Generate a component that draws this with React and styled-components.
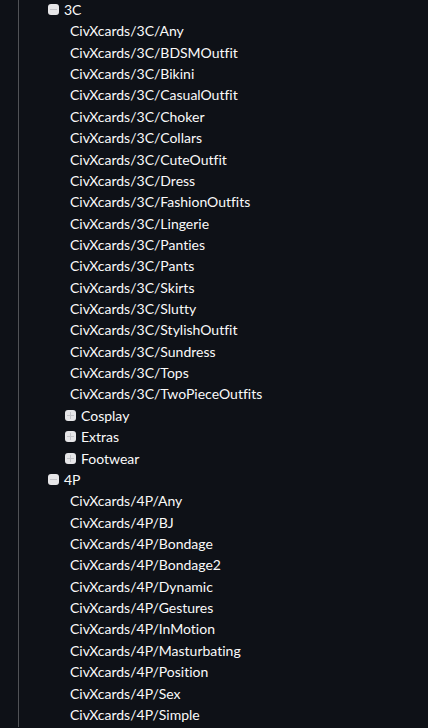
import React from 'react';
import styled, { createGlobalStyle } from 'styled-components';

const GlobalStyle = createGlobalStyle`
  html, body {
    margin: 0;
    padding: 0;
    background: #0e1117;
    height: 100%;
    overflow: hidden;
  }
  body {
    font-family: Lato, "Noto Sans", "Liberation Sans", sans-serif;
    font-variant-ligatures: none;
    font-feature-settings: "liga" 0, "clig" 0;
    color: #fafafa;
  }
`;

const Page = styled.div`
  height: 728px;
  padding-left: 18px;
  box-sizing: border-box;
`;

const Rail = styled.div`
  height: 100%;
  border-left: 1px solid rgba(250, 250, 250, 0.28);
  padding-left: 29px;
  margin-top: -1px;
`;

const List = styled.ul`
  list-style: none;
  margin: 0;
  padding: 0;
`;

const Row = styled.li`
  display: flex;
  align-items: center;
  gap: 5px;
  height: 21.36px;
  font-size: 14px;
  line-height: 21.36px;
  white-space: nowrap;
  padding-left: ${(p) => p.$indent || 0}px;
`;

const Leaf = styled.li`
  height: 21.36px;
  font-size: 14px;
  line-height: 21.36px;
  padding-left: 22px;
  white-space: nowrap;
`;

const Toggle = styled.span`
  position: relative;
  width: 11px;
  height: 11px;
  border-radius: 3px;
  background: #e6e6e8;
  flex: none;
  &::before,
  &::after {
    content: '';
    position: absolute;
    background: #c4c5c9;
  }
  &::before {
    left: 2px;
    right: 2px;
    top: 5px;
    height: 1px;
  }
  &::after {
    display: ${(p) => (p.$open ? 'none' : 'block')};
    top: 2px;
    bottom: 2px;
    left: 5px;
    width: 1px;
  }
`;

const Group = ({ label, open, indent, children }) => (
  <>
    <Row $indent={indent}>
      <Toggle $open={open} />
      {label}
    </Row>
    {open && children}
  </>
);

const c3 = [
  'Any', 'BDSMOutfit', 'Bikini', 'CasualOutfit', 'Choker', 'Collars', 'CuteOutfit',
  'Dress', 'FashionOutfits', 'Lingerie', 'Panties', 'Pants', 'Skirts', 'Slutty',
  'StylishOutfit', 'Sundress', 'Tops', 'TwoPieceOutfits',
];

const p4 = [
  'Any', 'BJ', 'Bondage', 'Bondage2', 'Dynamic', 'Gestures', 'InMotion',
  'Masturbating', 'Position', 'Sex', 'Simple',
];

const App = () => (
  <>
    <GlobalStyle />
    <Page>
      <Rail>
        <List>
          <Group label="3C" open>
            {c3.map((n) => (
              <Leaf key={n}>CivXcards/3C/{n}</Leaf>
            ))}
            {['Cosplay', 'Extras', 'Footwear'].map((n) => (
              <Group key={n} label={n} indent={17} />
            ))}
          </Group>
          <Group label="4P" open>
            {p4.map((n) => (
              <Leaf key={n}>CivXcards/4P/{n}</Leaf>
            ))}
          </Group>
        </List>
      </Rail>
    </Page>
  </>
);

export default App;
